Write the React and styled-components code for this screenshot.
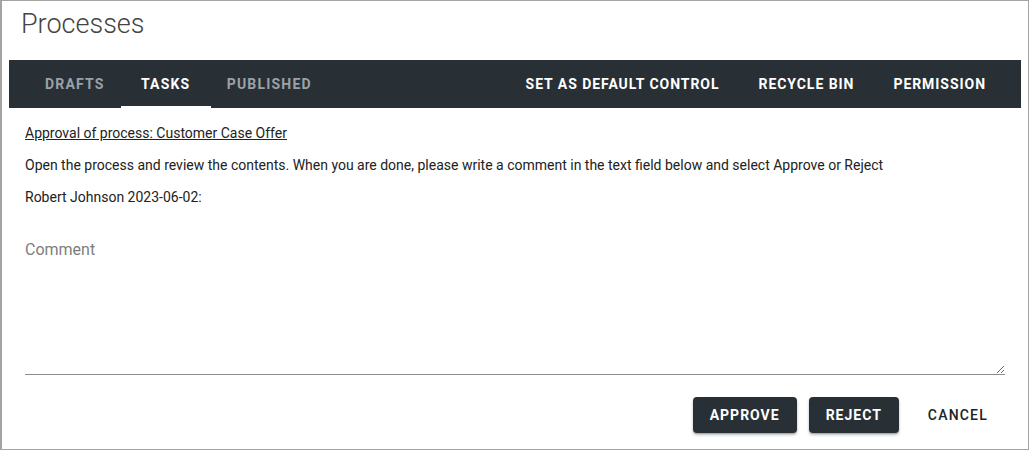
import React, { useState } from 'react';
import styled, { createGlobalStyle } from 'styled-components';

const GlobalStyle = createGlobalStyle`
  html, body {
    margin: 0;
    padding: 0;
    background: #fff;
  }
  body {
    font-family: Roboto, "Liberation Sans", Arial, sans-serif;
  }
`;

const Frame = styled.div`
  box-sizing: border-box;
  width: 1029px;
  height: 450px;
  border: 1px solid #a3a3a3;
  border-left-width: 2px;
  padding: 0 7px 0 7px;
  background: #fff;
  display: flex;
  flex-direction: column;
  overflow: hidden;
`;

const Title = styled.h1`
  margin: 0;
  padding: 3px 0 0 12px;
  height: 56px;
  box-sizing: border-box;
  font-family: Roboto, "Liberation Sans", sans-serif;
  font-size: 27px;
  line-height: 40px;
  font-weight: 300;
  color: #444;
`;

const NavBar = styled.nav`
  display: flex;
  justify-content: space-between;
  align-items: stretch;
  height: 48px;
  margin-top: 3px;
  background: #283036;
  padding: 0 35px 0 20px;
`;

const TabGroup = styled.div`
  display: flex;
`;

const Tab = styled.button`
  min-width: 90px;
  padding: 2px 16px 0;
  border: none;
  background: transparent;
  font-family: inherit;
  font-size: 14px;
  font-weight: 700;
  letter-spacing: 1.2px;
  text-transform: uppercase;
  color: ${(props) => (props.active ? '#ffffff' : '#9ba1a6')};
  cursor: pointer;
  border-bottom: 2px solid ${(props) => (props.active ? '#ffffff' : 'transparent')};
`;

const ActionGroup = styled.div`
  display: flex;
`;

const NavAction = styled.button`
  padding: 0 19.5px;
  border: none;
  background: transparent;
  font-family: inherit;
  font-size: 14px;
  font-weight: 700;
  letter-spacing: 0.95px;
  color: #ffffff;
  cursor: pointer;
  &:last-child {
    padding-right: 0;
  }
`;

const Content = styled.div`
  display: flex;
  flex-direction: column;
  padding: 0 16px;
  color: #222;
  font-size: 14px;
`;

const TaskLink = styled.a`
  margin-top: 15px;
  line-height: 20px;
  color: #222;
  text-decoration: underline;
  cursor: pointer;
  align-self: flex-start;
`;

const Line = styled.p`
  margin: 12px 0 0;
  line-height: 20px;
`;

const CommentBox = styled.textarea`
  margin-top: 27px;
  height: 141px;
  box-sizing: border-box;
  border: none;
  border-bottom: 1px solid #8c8c8c;
  padding: 6px 0 0;
  font-family: inherit;
  font-size: 16px;
  color: #222;
  outline: none;
  resize: vertical;
  &::placeholder {
    color: #7d7d7d;
  }
`;

const ButtonRow = styled.div`
  display: flex;
  justify-content: flex-end;
  gap: 12px;
  margin-top: 22px;
`;

const Button = styled.button`
  height: 36px;
  padding: 0 17px;
  border: none;
  border-radius: 4px;
  font-family: inherit;
  font-size: 14px;
  cursor: pointer;
  background: ${(props) => (props.flat ? 'transparent' : '#283036')};
  color: ${(props) => (props.flat ? '#222' : '#fff')};
  font-weight: ${(props) => (props.flat ? 500 : 700)};
  letter-spacing: ${(props) => (props.flat ? '1.2px' : '1px')};
  box-shadow: ${(props) =>
    props.flat ? 'none' : '0 2px 3px rgba(0,0,0,0.25), 0 1px 1px rgba(0,0,0,0.15)'};
`;

const tabs = ['Drafts', 'Tasks', 'Published'];

export default function App() {
  const [tab, setTab] = useState('Tasks');
  const [comment, setComment] = useState('');

  return (
    <>
      <GlobalStyle />
      <Frame>
        <Title>Processes</Title>
        <NavBar>
          <TabGroup>
            {tabs.map((t) => (
              <Tab key={t} active={tab === t} onClick={() => setTab(t)}>
                {t}
              </Tab>
            ))}
          </TabGroup>
          <ActionGroup>
            <NavAction>SET AS DEFAULT CONTROL</NavAction>
            <NavAction>RECYCLE BIN</NavAction>
            <NavAction>PERMISSION</NavAction>
          </ActionGroup>
        </NavBar>
        <Content>
          <TaskLink>Approval of process: Customer Case Offer</TaskLink>
          <Line>
            Open the process and review the contents. When you are done, please write a comment in the
            text field below and select Approve or Reject
          </Line>
          <Line>Robert Johnson 2023-06-02:</Line>
          <CommentBox
            placeholder="Comment"
            value={comment}
            onChange={(e) => setComment(e.target.value)}
          />
          <ButtonRow>
            <Button>APPROVE</Button>
            <Button>REJECT</Button>
            <Button flat>CANCEL</Button>
          </ButtonRow>
        </Content>
      </Frame>
    </>
  );
}
